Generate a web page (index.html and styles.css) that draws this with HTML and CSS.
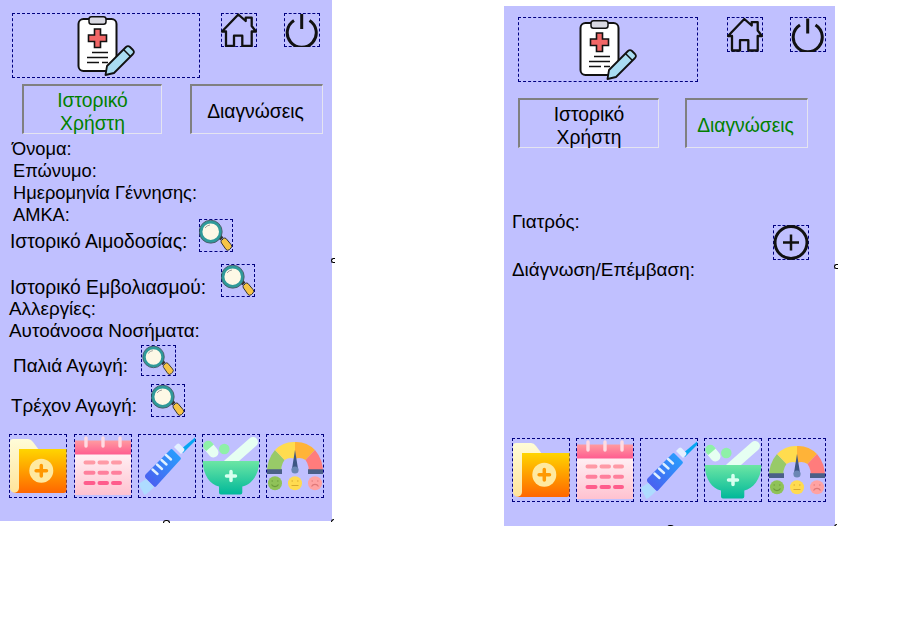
FILE: index.html
```html
<!DOCTYPE html>
<html lang="el">
<head>
  <meta charset="UTF-8" />
  <title>Ιστορικό Χρήστη</title>
  <link rel="stylesheet" href="styles.css">
</head>
<body>
  <svg class="sprites" width="0" height="0" aria-hidden="true">
    <defs>
      <linearGradient id="folderBack" x1="0" y1="0" x2="0" y2="1"><stop offset="0" stop-color="#fffcd8"/><stop offset="1" stop-color="#ffe49a"/></linearGradient>
      <linearGradient id="folderFront" x1="0" y1="0" x2="0" y2="1"><stop offset="0" stop-color="#ffd500"/><stop offset="1" stop-color="#ff6600"/></linearGradient>
      <linearGradient id="calHead" x1="0" y1="0" x2="0" y2="1"><stop offset="0" stop-color="#ff9ba0"/><stop offset="1" stop-color="#ff5c90"/></linearGradient>
      <linearGradient id="calBody" x1="0" y1="0" x2="0" y2="1"><stop offset="0" stop-color="#fff0f4"/><stop offset="1" stop-color="#ffc2d0"/></linearGradient>
      <linearGradient id="barrel" x1="1" y1="0" x2="0" y2="1"><stop offset="0" stop-color="#24a4ff"/><stop offset="1" stop-color="#4f58ee"/></linearGradient>
      <linearGradient id="bowl" x1="0" y1="0" x2="0" y2="1"><stop offset="0" stop-color="#6ce6a4"/><stop offset="1" stop-color="#00b89a"/></linearGradient>

      <symbol id="i-clipboard" viewBox="0 0 58 60">
        <rect x="1.5" y="3" width="38" height="52" rx="5" fill="#fff" stroke="#111" stroke-width="2"/>
        <rect x="12" y="0.8" width="17" height="7.5" rx="2.5" fill="#d9d9e2" stroke="#111" stroke-width="1.5"/>
        <path d="M17.5 13h6v6h6v6.500h-6v6h-6v-6h-6V19h6z" fill="#f26666" stroke="#111" stroke-width="1.6"/>
        <path d="M15 36.500h16M10 41.500h21M10 46.500h12M25 46.500h6" stroke="#111" stroke-width="1.300" fill="none"/>
        <path d="M30 50 L49 31 a3 3 0 0 1 4 0 l3 3 a3 3 0 0 1 0 4 L37 57 L28.500 59 Z" fill="#a9dcf2" stroke="#111" stroke-width="1.800" stroke-linejoin="round"/>
        <path d="M46.500 33.500l7 7" stroke="#111" stroke-width="1.500"/>
      </symbol>

      <symbol id="i-home" viewBox="0 0 36 34">
        <path d="M5 33V18.500H1L17.300 1.500 24.700 8V4.700h6V13L35 18.500h-4.300V33h-9.400V22.700H13V33z" fill="none" stroke="#111" stroke-width="2.300" stroke-linejoin="round"/>
      </symbol>

      <symbol id="i-power" viewBox="0 0 36 34">
        <path d="M10 7.500A14.500 14.500 0 1 0 25.500 7.500M17.700 1v15" fill="none" stroke="#111" stroke-width="3"/>
      </symbol>

      <symbol id="i-plus" viewBox="0 0 36 35">
        <circle cx="18" cy="17.500" r="16" fill="none" stroke="#111" stroke-width="3"/>
        <path d="M18 9.500v16M10 17.500h16" stroke="#111" stroke-width="2.500"/>
      </symbol>

      <symbol id="i-lens" viewBox="0 0 34 33">
        <path d="M19 19l3-3 2.500 2.500-3 3z" fill="#333"/>
        <path d="M22.500 21.500l2-2a2 2 0 0 1 2.500 0l5 6a2.500 2.500 0 0 1 0 3.500l-1.500 1.500a2.500 2.500 0 0 1-3.500 0l-4.500-6.500a2 2 0 0 1 0-2.500z" fill="#f6c445" stroke="#333" stroke-width="1"/>
        <circle cx="11.700" cy="12.700" r="9.800" fill="#fdf8e6" stroke="#2f9a9a" stroke-width="3"/>
        <circle cx="11.700" cy="12.700" r="11.500" fill="none" stroke="#3a4a50" stroke-width="0.800"/>
        <path d="M6 9a7 7 0 0 1 5-3" fill="none" stroke="#888" stroke-width="0.800"/>
      </symbol>

      <symbol id="i-folder" viewBox="0 0 58 64">
        <path d="M1 8a3 3 0 0 1 3-3h15q3 0 5 3l6 8v43H6a5 5 0 0 1-5-5z" fill="url(#folderBack)"/>
        <path d="M10 15h47.500v41a3 3 0 0 1-3 3H3q7 0 7-5z" fill="url(#folderFront)"/>
        <circle cx="32.300" cy="36.700" r="12" fill="#ffe9a0"/>
        <path d="M32.300 31.500v10.400M27.100 36.700h10.400" stroke="#ff9800" stroke-width="3.500" stroke-linecap="round"/>
      </symbol>

      <symbol id="i-calendar" viewBox="0 0 58 64">
        <rect x="1" y="20" width="56" height="41" fill="url(#calBody)"/>
        <rect x="1" y="6.500" width="56" height="14" fill="url(#calHead)"/>
        <path d="M12 4v8M29 4v8M46 4v8" stroke="#ffdbe2" stroke-width="3.400" stroke-linecap="round"/>
        <path d="M11.500 28.500h8M25.500 28.500h7.500M39 28.500h7" stroke="#ff9aa6" stroke-width="4" stroke-linecap="round"/>
        <path d="M11.500 38.700h8M25.500 38.700h7.500M39 38.700h7" stroke="#ff7f9c" stroke-width="4" stroke-linecap="round"/>
        <path d="M11.500 49h8M25.500 49h7.500M39 49h7" stroke="#ff5c8c" stroke-width="4" stroke-linecap="round"/>
      </symbol>

      <symbol id="i-syringe" viewBox="0 0 58 64">
        <path d="M57 3.500l.5 3L45 19l-3-3z" fill="#06a6f2"/>
        <path d="M36 13l3-3a2 2 0 0 1 2.500 0l4.500 4.500a2 2 0 0 1 0 2.500l-3 3z" fill="#e4f0ff"/>
        <path d="M8 40L32.500 15.500a1.500 1.500 0 0 1 2 0l8 8a1.500 1.500 0 0 1 0 2L18 52.500a1.500 1.500 0 0 1-2 0l-8-8a3 3 0 0 1 0-4.500z" fill="url(#barrel)"/>
        <path d="M28 21l5 4.500M23.500 26l5 4.500M19 30.500l5 4.500M14.500 35.500l5 4.500" stroke="#dff0ff" stroke-width="2.400" stroke-linecap="round"/>
        <path d="M8 45l8 8-3 3-4 3.500-2.500 1.500L1 51l1-2z" fill="#aedcff"/>
      </symbol>

      <symbol id="i-mortar" viewBox="0 0 58 64">
        <path d="M26 30L51 8" stroke="#e6fff2" stroke-width="10" stroke-linecap="round"/>
        <path d="M11.500 18.500L7 13" stroke="#e6fff2" stroke-width="10" stroke-linecap="round"/>
        <path d="M2.300 8.800a5 5 0 0 1 7.500-.5l2 2.200-7.600 6.500-2-2.300a5 5 0 0 1 .1-5.900z" fill="#8ef0a8"/>
        <circle cx="22.300" cy="15" r="5.300" fill="#8ef0a8"/>
        <path d="M.8 27h56.500c0 14-8.500 24-17 25.500v6a2 2 0 0 1-2 2H19a2 2 0 0 1-2-2v-6C8.500 51 .8 41 .8 27z" fill="url(#bowl)"/>
        <path d="M29 37.500v9M24.500 42h9" stroke="#d8fff0" stroke-width="3.500" stroke-linecap="round"/>
      </symbol>

      <symbol id="i-gauge" viewBox="0 0 58 64">
        <path d="M1 40A28 32 0 0 1 9 16L18.500 26A13 15 0 0 0 16 40z" fill="#98ca68"/>
        <path d="M9 16A28 32 0 0 1 29 8V25A13 15 0 0 0 18.500 26z" fill="#ffdc4e"/>
        <path d="M29 8A28 32 0 0 1 49 16L39.500 26A13 15 0 0 0 29 25z" fill="#ffb338"/>
        <path d="M49 16A28 32 0 0 1 57 40H42A13 15 0 0 0 39.500 26z" fill="#ff7c7c"/>
        <path d="M1 35.300h15V40H1zM42 35.300h15V40H42z" fill="#4b6088"/>
        <path d="M29 16l3.200 20H25.800z" fill="#3d5684"/>
        <circle cx="29" cy="36" r="3.600" fill="#6a86b4"/>
        <circle cx="9" cy="49.300" r="7" fill="#8fc258"/>
        <circle cx="29" cy="49.300" r="7" fill="#ffdb50"/>
        <circle cx="49" cy="49.300" r="7" fill="#ffa2a2"/>
        <path d="M5.500 47h1.500M11 47h1.500M5.500 50.500a4 4 0 0 0 7 0" stroke="#6d9c3c" stroke-width="1.200" fill="none"/>
        <path d="M25.500 47h1.500M31 47h1.500M25.500 51.500h7" stroke="#d8a92e" stroke-width="1.200" fill="none"/>
        <path d="M45.500 47h1.500M51 47h1.500M45.500 52.500a4 4 0 0 1 7 0" stroke="#e07878" stroke-width="1.200" fill="none"/>
      </symbol>
    </defs>
  </svg>

  <main class="screen screen-history">
    <header class="top">
      <div class="logo hot"><svg class="logo-img"><use href="#i-clipboard"/></svg></div>
      <a class="hot nav-home"><svg class="fill"><use href="#i-home"/></svg></a>
      <a class="hot nav-power"><svg class="fill"><use href="#i-power"/></svg></a>
    </header>

    <nav class="tabs">
      <button class="tab tab-a active">Ιστορικό<br>Χρήστη</button>
      <button class="tab tab-b">Διαγνώσεις</button>
    </nav>

    <section class="info">
      <div class="line at-12">Όνομα:</div>
      <div class="line at-13">Επώνυμο:</div>
      <div class="line at-13">Ημερομηνία Γέννησης:</div>
      <div class="line at-13">ΑΜΚΑ:</div>

      <div class="row row-blood">
        <span class="line big">Ιστορικό Αιμοδοσίας:</span>
        <a class="hot lens"><svg class="fill"><use href="#i-lens"/></svg></a>
      </div>
      <div class="row row-vaccine">
        <span class="line big">Ιστορικό Εμβολιασμού:</span>
        <a class="hot lens"><svg class="fill"><use href="#i-lens"/></svg></a>
      </div>
      <div class="line mid at-9 after-vaccine">Αλλεργίες:</div>
      <div class="line mid at-9">Αυτοάνοσα Νοσήματα:</div>
      <div class="row row-old">
        <span class="line mid">Παλιά Αγωγή:</span>
        <a class="hot lens lens-short"><svg class="fill"><use href="#i-lens"/></svg></a>
      </div>
      <div class="row row-now">
        <span class="line mid">Τρέχον Αγωγή:</span>
        <a class="hot lens"><svg class="fill"><use href="#i-lens"/></svg></a>
      </div>
    </section>

    <footer class="launch">
      <a class="hot app"><svg class="fill"><use href="#i-folder"/></svg></a>
      <a class="hot app"><svg class="fill"><use href="#i-calendar"/></svg></a>
      <a class="hot app"><svg class="fill"><use href="#i-syringe"/></svg></a>
      <a class="hot app"><svg class="fill"><use href="#i-mortar"/></svg></a>
      <a class="hot app"><svg class="fill"><use href="#i-gauge"/></svg></a>
    </footer>

    <i class="handle handle-right"></i>
    <i class="handle handle-bottom"></i>
    <i class="handle handle-corner"></i>
  </main>

  <main class="screen screen-diagnosis">
    <header class="top">
      <div class="logo hot"><svg class="logo-img"><use href="#i-clipboard"/></svg></div>
      <a class="hot nav-home"><svg class="fill"><use href="#i-home"/></svg></a>
      <a class="hot nav-power"><svg class="fill"><use href="#i-power"/></svg></a>
    </header>

    <nav class="tabs">
      <button class="tab tab-a">Ιστορικό<br>Χρήστη</button>
      <button class="tab tab-b active">Διαγνώσεις</button>
    </nav>

    <section class="diagnosis">
      <div class="diagnosis-labels">
        <div class="line mid">Γιατρός:</div>
        <div class="line mid">Διάγνωση/Επέμβαση:</div>
      </div>
      <a class="hot add"><svg class="fill"><use href="#i-plus"/></svg></a>
    </section>

    <footer class="launch">
      <a class="hot app"><svg class="fill"><use href="#i-folder"/></svg></a>
      <a class="hot app"><svg class="fill"><use href="#i-calendar"/></svg></a>
      <a class="hot app"><svg class="fill"><use href="#i-syringe"/></svg></a>
      <a class="hot app"><svg class="fill"><use href="#i-mortar"/></svg></a>
      <a class="hot app"><svg class="fill"><use href="#i-gauge"/></svg></a>
    </footer>

    <i class="handle handle-right"></i>
    <i class="handle handle-bottom"></i>
    <i class="handle handle-corner"></i>
  </main>
</body>
</html>
```
FILE: styles.css
```css
:root {
  --panel: #c0c0ff;
  --hot: #000080;
  --active: #008000;
  --ink: #000;
}

* {
  box-sizing: border-box;
}

body {
  margin: 0;
  background: #fff;
  color: var(--ink);
  font-family: "Liberation Sans", Arial, sans-serif;
  font-size: 18.3px;
  display: flex;
  align-items: flex-start;
  gap: 172px;
}

.sprites {
  position: absolute;
}

.screen {
  position: relative;
  width: 332px;
  height: 521px;
  background: var(--panel);
  padding-top: 13px;
  flex: none;
}

.screen-diagnosis {
  width: 331px;
  height: 520px;
  margin-top: 6px;
  padding-top: 11px;
}

/* dashed hotspots round every clickable thing */
.hot {
  display: block;
  border: 1px dashed var(--hot);
  flex: none;
}

/* icons span the hotspot, dashes included */
.fill {
  display: block;
  width: calc(100% + 2px);
  height: calc(100% + 2px);
  margin: -1px;
  overflow: visible;
}

/* top bar */
.top {
  display: flex;
  align-items: flex-start;
  height: 65px;
}

.logo {
  width: 188px;
  height: 65px;
  margin-left: 12px;
  display: flex;
  justify-content: center;
  align-items: center;
}

.logo-img {
  width: 58px;
  height: 60px;
}

.nav-home,
.nav-power {
  width: 36px;
  height: 34px;
}

.nav-home {
  margin-left: 21px;
}

.nav-power {
  margin-left: 27px;
}

.screen-diagnosis .logo {
  width: 180px;
  margin-left: 14px;
}

.screen-diagnosis .nav-home {
  margin-left: 29px;
  height: 35px;
}

.screen-diagnosis .nav-power {
  height: 35px;
}

/* tabs */
.tabs {
  display: flex;
  margin-top: 6px;
}

.tab {
  height: 50px;
  padding: 3px 0 0;
  background: transparent;
  border-style: solid;
  border-width: 2px 1px 1px 2px;
  border-color: #808080 #e4e4f0 #e4e4f0 #808080;
  font: inherit;
  font-size: 19.3px;
  line-height: 23px;
  color: var(--ink);
  text-align: center;
}

.tab.active {
  color: var(--active);
}

.tab-a {
  width: 140px;
  margin-left: 22px;
}

.tab-b {
  width: 133px;
  margin-left: 28px;
  padding-right: 3px;
}

.screen-diagnosis .tabs {
  margin-top: 16px;
}

.screen-diagnosis .tab-a {
  width: 141px;
  margin-left: 14px;
}

.screen-diagnosis .tab-b {
  width: 123px;
  margin-left: 26px;
}

/* history text */
.info {
  margin-top: 4px;
}

.line {
  display: block;
  height: 22px;
  line-height: 22px;
  white-space: nowrap;
}

.big {
  font-size: 19.3px;
}

.mid {
  font-size: 18.9px;
}

.at-12 {
  margin-left: 12px;
}

.at-13 {
  margin-left: 13px;
}

.at-9 {
  margin-left: 9px;
}

.row {
  display: flex;
  align-items: flex-end;
}

.lens {
  width: 34px;
  height: 33px;
}

.lens-short {
  width: 35px;
  height: 31px;
}

.row-blood {
  margin: -7px 0 0 10px;
}

.row-blood .line {
  margin-bottom: -1px;
}

.row-blood .lens {
  margin-left: 12px;
}

.row-vaccine {
  margin: 12px 0 0 10px;
}

.row-vaccine .line {
  margin-bottom: -2px;
}

.row-vaccine .lens {
  margin-left: 15px;
}

.after-vaccine {
  margin-top: 1px;
}

.row-old {
  margin: 3px 0 0 13px;
}

.row-old .line {
  margin-bottom: -1px;
}

.row-old .lens {
  margin-left: 13px;
}

.row-now {
  margin: 8px 0 0 11px;
}

.row-now .lens {
  margin-left: 14px;
}

/* diagnosis tab */
.diagnosis {
  display: flex;
  align-items: flex-start;
  margin: 63px 0 0 8px;
}

.diagnosis-labels {
  width: 261px;
  display: flex;
  flex-direction: column;
  gap: 26px;
}

.add {
  width: 36px;
  height: 35px;
  margin-top: 14px;
}

/* bottom launcher */
.launch {
  display: flex;
  gap: 6px;
  margin: 17px 0 0 9px;
}

.app {
  width: 58px;
  height: 64px;
}

.screen-history .app:first-child {
  margin-right: 1px;
}

.screen-diagnosis .launch {
  margin: 157px 0 0 8px;
}

/* resize handles sitting on the panel edge */
.handle {
  position: absolute;
  width: 5px;
  height: 5px;
  background: #fff;
  border: 1px solid #000;
}

.handle-right {
  right: -3px;
  top: 258px;
  border-right: 0;
  border-radius: 3px 0 0 3px;
  width: 4px;
}

.handle-bottom {
  left: 163px;
  bottom: -2px;
  width: 7px;
  height: 3px;
  border-bottom: 0;
  border-radius: 3px 3px 0 0;
}

.handle-corner {
  right: -2px;
  bottom: -1px;
  width: 3px;
  height: 3px;
  border-right: 0;
  border-bottom: 0;
  border-radius: 3px 0 0 0;
}
```
